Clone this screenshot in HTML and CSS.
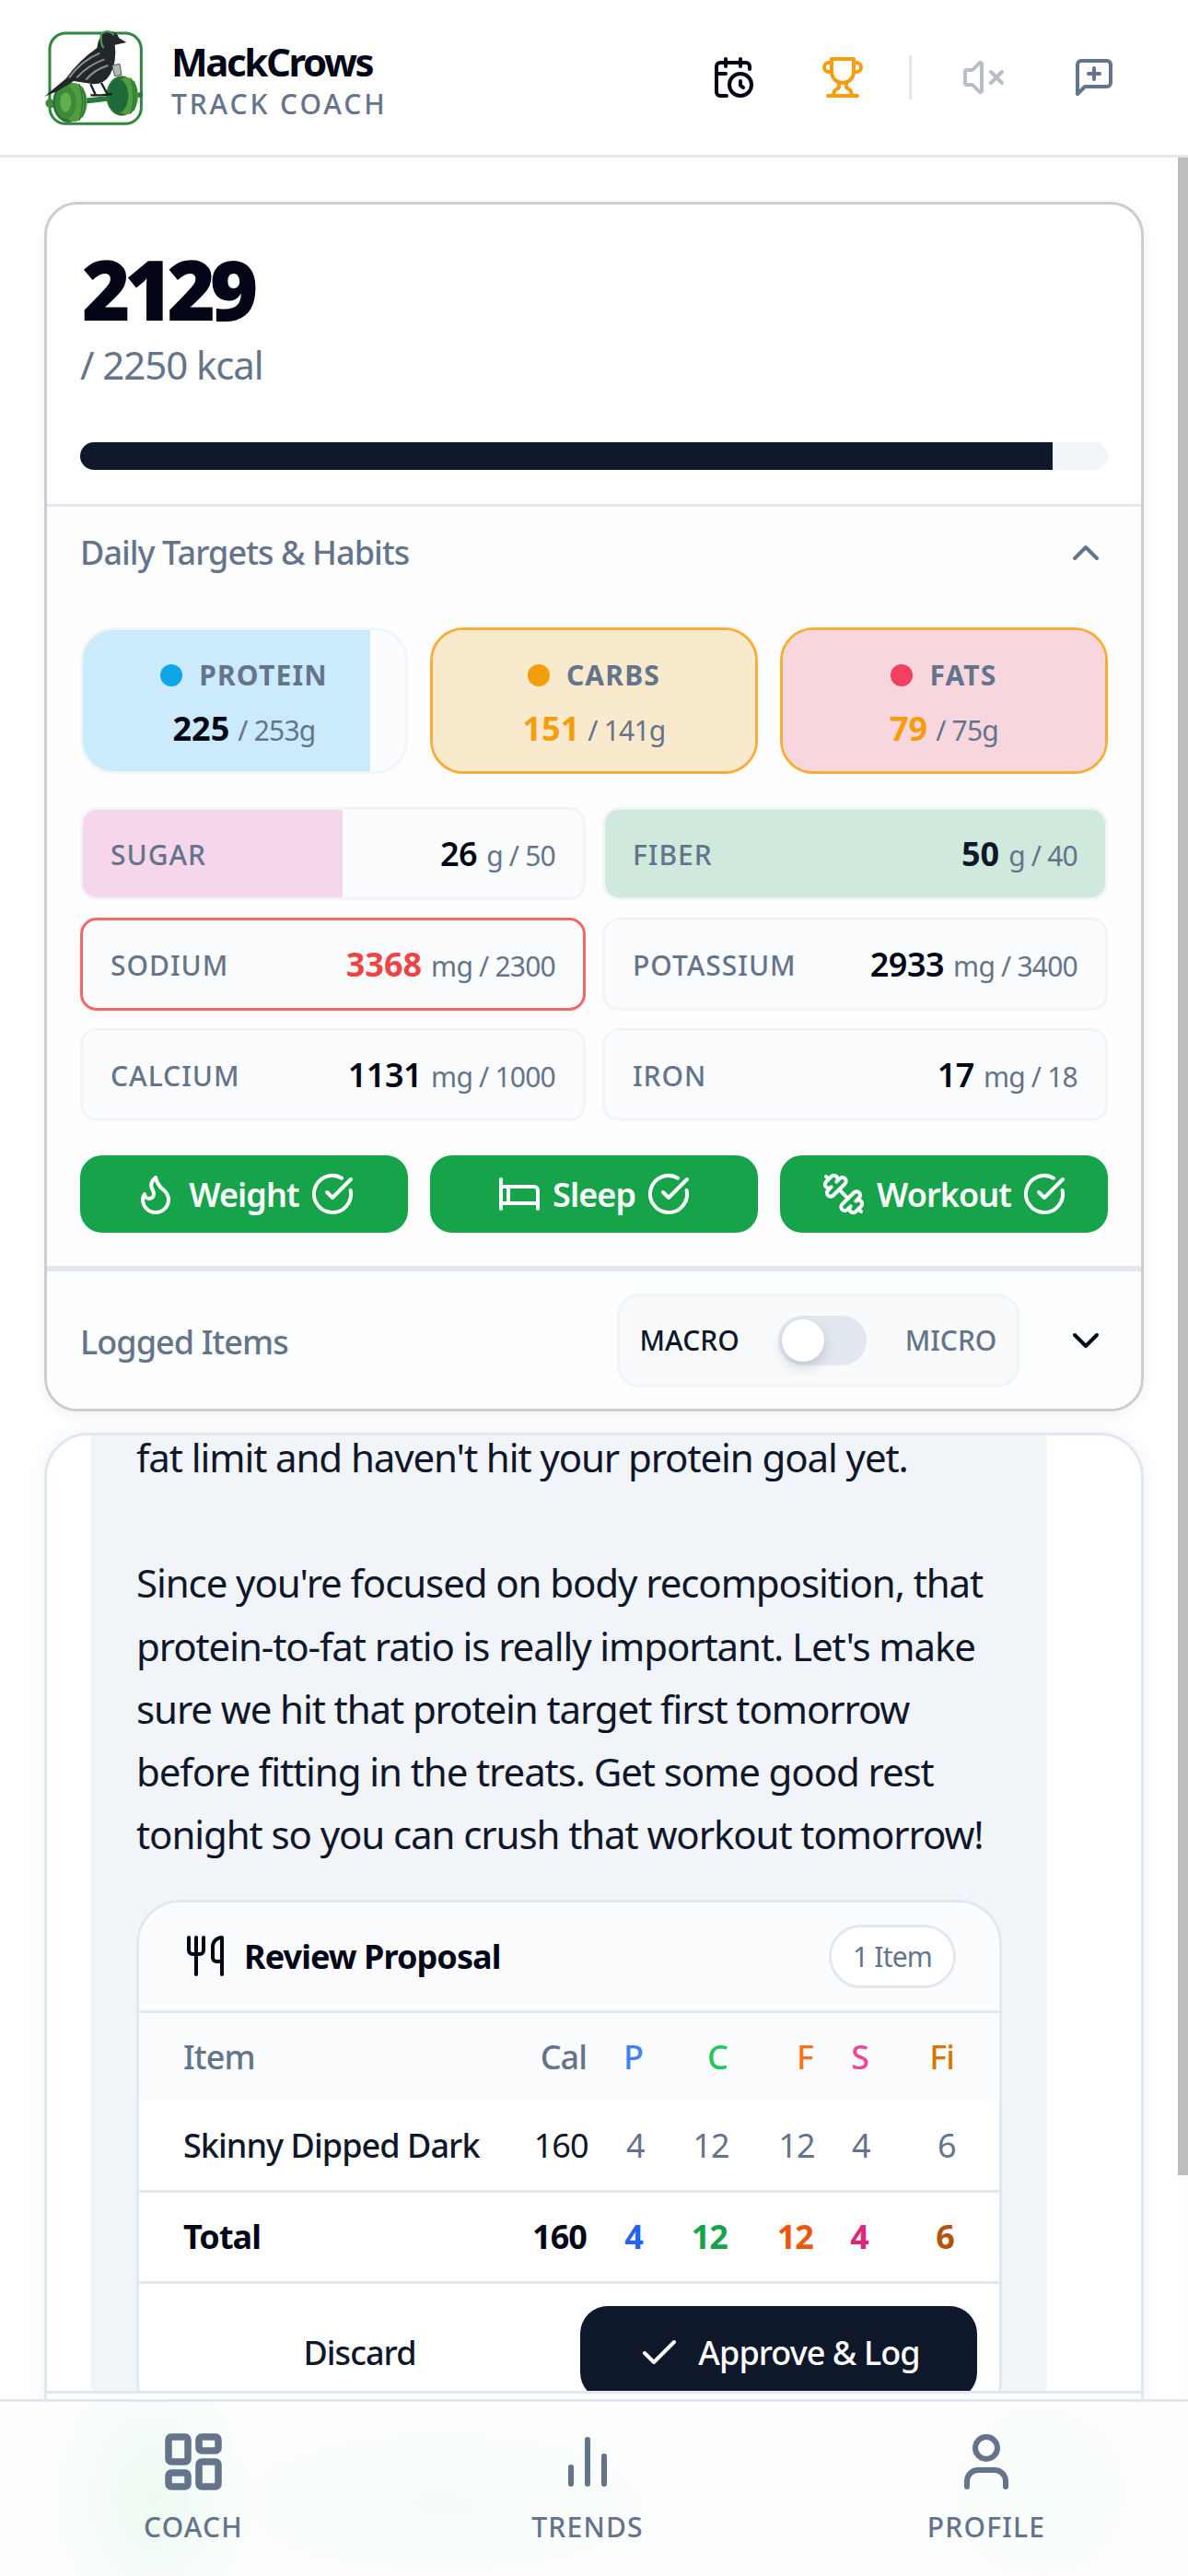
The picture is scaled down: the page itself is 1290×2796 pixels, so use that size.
FILE: index.html
```html
<!DOCTYPE html>
<html lang="en">
<head>
<meta charset="utf-8">
<title>MackCrows Track Coach</title>
<link rel="stylesheet" href="styles.css">
</head>
<body>
<div class="app">
  <header class="topbar">
    <div class="brand">
      <svg class="logo" viewBox="54 45 321 321">
        <rect x="72" y="60" width="298" height="295" rx="52" fill="#fff" stroke="#2f8542" stroke-width="9"/>
        <path d="M70 284 L375 252 L375 268 L70 304 Z" fill="#2c7a37"/>
        <circle cx="72" cy="288" r="14" fill="#3d8b3d"/>
        <ellipse cx="132" cy="285" rx="50" ry="66" fill="#2b7334"/>
        <ellipse cx="152" cy="285" rx="42" ry="63" fill="#4f9d40"/>
        <path d="M168 226 Q190 285 168 344 M178 236 Q196 285 178 334" stroke="#2b7334" stroke-width="4" fill="none"/>
        <ellipse cx="124" cy="285" rx="34" ry="54" fill="#3b8a3a"/>
        <ellipse cx="124" cy="285" rx="18" ry="32" fill="#62ad4c"/>
        <ellipse cx="306" cy="264" rx="50" ry="65" fill="#2b7334"/>
        <ellipse cx="322" cy="264" rx="38" ry="61" fill="#4f9d40"/>
        <path d="M336 206 Q356 264 336 322 M346 216 Q360 264 346 312" stroke="#2b7334" stroke-width="4" fill="none"/>
        <ellipse cx="296" cy="264" rx="32" ry="54" fill="#1f6a3a"/>
        <path d="M55 266 L125 208 Q165 150 226 108 Q232 62 262 54 Q290 52 298 76 L322 90 L284 98 Q292 150 268 196 Q250 226 214 226 L150 216 L95 250 Z" fill="#24272a"/>
        <path d="M135 205 Q175 150 235 125 M160 205 Q195 165 250 145 M190 212 Q215 180 262 165" stroke="#8b9094" stroke-width="6" fill="none"/>
        <path d="M205 226 L222 262 M240 222 L262 262 M205 262 L240 262 M240 262 L275 258" stroke="#1c1e20" stroke-width="7" fill="none"/>
        <path d="M240 62 Q236 95 248 108 M240 62 Q262 45 282 66" stroke="#3d9a4a" stroke-width="7" fill="none"/>
        <path d="M275 165 L300 160 L306 195 L284 200 Z" fill="#b4b8bb" stroke="#555" stroke-width="3"/>
      </svg>
      <div class="brand-text">
        <div class="brand-name">MackCrows</div>
        <div class="brand-sub">TRACK COACH</div>
      </div>
    </div>
    <div class="top-actions">
      <svg class="ic ic-dark" viewBox="0 0 24 24"><path d="M21 7.5V6a2 2 0 0 0-2-2H5a2 2 0 0 0-2 2v14a2 2 0 0 0 2 2h3.5"/><path d="M16 2v4"/><path d="M8 2v4"/><path d="M3 10h5"/><path d="M17.5 17.5 16 16.3V14"/><circle cx="16" cy="16" r="6"/></svg>
      <svg class="ic ic-amber" viewBox="0 0 24 24"><path d="M6 9H4.5a2.5 2.5 0 0 1 0-5H6"/><path d="M18 9h1.5a2.5 2.5 0 0 0 0-5H18"/><path d="M4 22h16"/><path d="M10 14.66V17c0 .55-.47.98-.97 1.21C7.85 18.75 7 20.24 7 22"/><path d="M14 14.66V17c0 .55.47.98.97 1.21C16.15 18.75 17 20.24 17 22"/><path d="M18 2H6v7a6 6 0 0 0 12 0V2Z"/></svg>
      <span class="top-sep"></span>
      <svg class="ic ic-muted" viewBox="0 0 24 24"><path d="M11 4.702a.705.705 0 0 0-1.203-.498L6.413 7.587A1.4 1.4 0 0 1 5.416 8H3a1 1 0 0 0-1 1v6a1 1 0 0 0 1 1h2.416a1.4 1.4 0 0 1 .997.413l3.383 3.384A.705.705 0 0 0 11 19.298z"/><path d="M22 9l-6 6"/><path d="M16 9l6 6"/></svg>
      <svg class="ic ic-slate" viewBox="0 0 24 24"><path d="M21 15a2 2 0 0 1-2 2H7l-4 4V5a2 2 0 0 1 2-2h14a2 2 0 0 1 2 2z"/><path d="M12 7v6"/><path d="M9 10h6"/></svg>
    </div>
  </header>

  <div class="main">
    <div class="scroll">
      <section class="card summary">
        <div class="kcal">
          <div class="kcal-num">2129</div>
          <div class="kcal-goal">/ 2250 kcal</div>
          <div class="bar"><div class="bar-fill" style="width:94.6%"></div></div>
        </div>
        <div class="targets">
          <div class="sec-head">
            <span class="sec-title">Daily Targets &amp; Habits</span>
            <svg class="ic ic-slate" viewBox="0 0 24 24"><path d="m18 15-6-6-6 6"/></svg>
          </div>
          <div class="macros">
            <div class="macro">
              <div class="fill fill-sky" style="width:89%"></div>
              <div class="macro-label"><span class="dot dot-sky"></span>PROTEIN</div>
              <div class="macro-val"><b>225</b> <span>/ 253g</span></div>
            </div>
            <div class="macro over">
              <div class="fill fill-amber" style="width:100%"></div>
              <div class="macro-label"><span class="dot dot-amber"></span>CARBS</div>
              <div class="macro-val"><b class="amber">151</b> <span>/ 141g</span></div>
            </div>
            <div class="macro over">
              <div class="fill fill-rose" style="width:100%"></div>
              <div class="macro-label"><span class="dot dot-rose"></span>FATS</div>
              <div class="macro-val"><b class="amber">79</b> <span>/ 75g</span></div>
            </div>
          </div>
          <div class="micros">
            <div class="micro">
              <div class="fill fill-pink" style="width:52%"></div>
              <span class="micro-label">SUGAR</span>
              <span class="micro-val"><b>26</b> <span>g / 50</span></span>
            </div>
            <div class="micro">
              <div class="fill fill-green" style="width:100%"></div>
              <span class="micro-label">FIBER</span>
              <span class="micro-val"><b class="heavy">50</b> <span>g / 40</span></span>
            </div>
            <div class="micro alert">
              <span class="micro-label">SODIUM</span>
              <span class="micro-val"><b class="heavy red">3368</b> <span>mg / 2300</span></span>
            </div>
            <div class="micro">
              <span class="micro-label">POTASSIUM</span>
              <span class="micro-val"><b>2933</b> <span>mg / 3400</span></span>
            </div>
            <div class="micro">
              <span class="micro-label">CALCIUM</span>
              <span class="micro-val"><b>1131</b> <span>mg / 1000</span></span>
            </div>
            <div class="micro">
              <span class="micro-label">IRON</span>
              <span class="micro-val"><b>17</b> <span>mg / 18</span></span>
            </div>
          </div>
          <div class="habits">
            <button class="habit">
              <svg class="ic" viewBox="0 0 24 24"><path d="M8.5 14.5A2.5 2.5 0 0 0 11 12c0-1.38-.5-2-1-3-1.072-2.143-.224-4.054 2-6 .5 2.5 2 4.9 4 6.5 2 1.6 3 3.5 3 5.5a7 7 0 1 1-14 0c0-1.153.433-2.294 1-3a2.5 2.5 0 0 0 2.5 2.5z"/></svg>
              <span>Weight</span>
              <svg class="ic" viewBox="0 0 24 24"><path d="M21.801 10A10 10 0 1 1 17 3.335"/><path d="m9 11 3 3L22 4"/></svg>
            </button>
            <button class="habit">
              <svg class="ic" viewBox="0 0 24 24"><path d="M2 4v16"/><path d="M2 8h18a2 2 0 0 1 2 2v10"/><path d="M2 17h20"/><path d="M6 8v9"/></svg>
              <span>Sleep</span>
              <svg class="ic" viewBox="0 0 24 24"><path d="M21.801 10A10 10 0 1 1 17 3.335"/><path d="m9 11 3 3L22 4"/></svg>
            </button>
            <button class="habit">
              <svg class="ic" viewBox="0 0 24 24"><path d="M14.4 14.4 9.6 9.6"/><path d="M18.657 21.485a2 2 0 1 1-2.829-2.828l-1.767 1.768a2 2 0 1 1-2.829-2.829l6.364-6.364a2 2 0 1 1 2.829 2.829l-1.768 1.767a2 2 0 1 1 2.828 2.829z"/><path d="m21.5 21.5-1.4-1.4"/><path d="M3.9 3.9 2.5 2.5"/><path d="M6.404 12.768a2 2 0 1 1-2.829-2.829l1.768-1.767a2 2 0 1 1-2.828-2.829l2.828-2.828a2 2 0 1 1 2.829 2.828l1.767-1.768a2 2 0 1 1 2.829 2.829z"/></svg>
              <span>Workout</span>
              <svg class="ic" viewBox="0 0 24 24"><path d="M21.801 10A10 10 0 1 1 17 3.335"/><path d="m9 11 3 3L22 4"/></svg>
            </button>
          </div>
        </div>
        <div class="logged">
          <span class="sec-title">Logged Items</span>
          <div class="switch-box">
            <span class="sw-on">MACRO</span>
            <span class="switch"><span class="thumb"></span></span>
            <span class="sw-off">MICRO</span>
          </div>
          <svg class="ic ic-dark" viewBox="0 0 24 24"><path d="m6 9 6 6 6-6"/></svg>
        </div>
      </section>

      <section class="card chat">
        <div class="messages">
          <div class="bubble">
            <p class="msg">fat limit and haven't hit your protein goal yet.</p>
            <p class="msg msg-next">Since you're focused on body recomposition, that protein-to-fat ratio is really important. Let's make sure we hit that protein target first tomorrow before fitting in the treats. Get some good rest tonight so you can crush that workout tomorrow!</p>
            <div class="proposal">
              <div class="prop-head">
                <svg class="ic ic-dark" viewBox="0 0 24 24"><path d="M3 2v7c0 1.1.9 2 2 2h4a2 2 0 0 0 2-2V2"/><path d="M7 2v20"/><path d="M21 15V2a5 5 0 0 0-5 5v6c0 1.1.9 2 2 2h3Zm0 0v7"/></svg>
                <span class="prop-title">Review Proposal</span>
                <span class="pill">1 Item</span>
              </div>
              <div class="row row-head">
                <span class="cell-name">Item</span><span>Cal</span>
                <span class="c-p">P</span><span class="c-c">C</span><span class="c-f">F</span><span class="c-s">S</span><span class="c-fi">Fi</span>
              </div>
              <div class="row row-item">
                <span class="cell-name">Skinny Dipped Dark</span><span class="cal">160</span>
                <span>4</span><span>12</span><span>12</span><span>4</span><span>6</span>
              </div>
              <div class="row row-total">
                <span class="cell-name">Total</span><span>160</span>
                <span class="t-p">4</span><span class="t-c">12</span><span class="t-f">12</span><span class="t-s">4</span><span class="t-fi">6</span>
              </div>
              <div class="prop-actions">
                <button class="discard">Discard</button>
                <button class="approve">
                  <svg class="ic" viewBox="0 0 24 24"><path d="M20 6 9 17l-5-5"/></svg>
                  Approve &amp; Log
                </button>
              </div>
            </div>
          </div>
        </div>
        <div class="composer"></div>
      </section>
    </div>
    <div class="scrollbar"><div class="scroll-thumb"></div></div>
  </div>

  <nav class="tabs">
    <div class="tab">
      <svg class="ic tab-ic tab-heavy" viewBox="0 0 24 24"><rect width="7" height="9" x="3" y="3" rx="1"/><rect width="7" height="5" x="14" y="3" rx="1"/><rect width="7" height="9" x="14" y="12" rx="1"/><rect width="7" height="5" x="3" y="16" rx="1"/></svg>
      <span>COACH</span>
    </div>
    <div class="tab">
      <svg class="ic tab-ic" viewBox="0 0 24 24"><path d="M18 20V10"/><path d="M12 20V4"/><path d="M6 20v-6"/></svg>
      <span>TRENDS</span>
    </div>
    <div class="tab">
      <svg class="ic tab-ic" viewBox="0 0 24 24"><path d="M19 21v-2a4 4 0 0 0-4-4H9a4 4 0 0 0-4 4v2"/><circle cx="12" cy="7" r="4"/></svg>
      <span>PROFILE</span>
    </div>
  </nav>
</div>
</body>
</html>
```
FILE: styles.css
```css
* { box-sizing: border-box; letter-spacing: -0.026em; }
html, body { margin: 0; padding: 0; }
body { width: 1290px; height: 2796px; overflow: hidden; background: #fff; font-family: "Noto Sans", sans-serif; color: #0f172a; }
button { font-family: inherit; border: 0; background: none; padding: 0; }
p { margin: 0; }
.app { width: 1290px; height: 2796px; display: flex; flex-direction: column; }

.ic { width: 48px; height: 48px; flex: none; fill: none; stroke: currentColor; stroke-width: 2; stroke-linecap: round; stroke-linejoin: round; display: block; }
.ic-dark { color: #020617; }
.ic-amber { color: #f59e0b; }
.ic-muted { color: #b6bec9; }
.ic-slate { color: #64748b; }

.topbar { height: 171px; flex: none; border-bottom: 3px solid #e2e8f0; display: flex; align-items: center; justify-content: space-between; padding: 0 78px 0 48px; }
.brand { display: flex; align-items: center; gap: 31px; }
.logo { width: 107px; height: 107px; display: block; }
.brand-text { padding-top: 6px; }
.brand-name { font-size: 42px; line-height: 52px; font-weight: 700; color: #020617; letter-spacing: -2.4px; }
.brand-sub { font-size: 30px; line-height: 40px; font-weight: 500; color: #64748b; letter-spacing: 2.9px; margin-top: 0; }
.top-actions { display: flex; align-items: center; }
.top-actions .ic-amber { margin-left: 71px; }
.top-sep { width: 3px; height: 48px; background: #e2e8f0; margin: 0 54px 0 48px; }
.top-actions .ic-slate { margin-left: 72px; }

.main { flex: 1; min-height: 0; display: flex; overflow: hidden; }
.scroll { width: 1279px; flex: none; padding: 48px 37px 0 48px; overflow: hidden; display: flex; flex-direction: column; gap: 23px; }
.scrollbar { width: 11px; flex: none; background: #fdfdfd; }
.scroll-thumb { height: 2190px; background: #bdbdbd; }

.card { border-radius: 36px; background: #fff; flex: none; }
.summary { border: 3px solid #cbcdd2; box-shadow: 0 4px 14px rgba(15, 23, 42, .06); overflow: hidden; }

.kcal { height: 325px; padding: 46px 36px 0; }
.kcal-num { font-size: 90px; line-height: 90px; font-weight: 900; color: #020617; letter-spacing: -6.5px; padding-left: 2px; }
.kcal-goal { font-size: 42px; line-height: 60px; color: #64748b; margin-top: 8px; }
.bar { height: 30px; background: #f1f5f9; border-radius: 15px; margin-top: 54px; overflow: hidden; }
.bar-fill { height: 100%; background: #0f172a; }

.targets { border-top: 3px solid #e2e8f0; padding: 0 36px 36px; background: #fefefe; border-bottom: 6px solid #e2e8f0; }
.sec-head { height: 131px; display: flex; align-items: center; justify-content: space-between; padding-bottom: 32px; }
.sec-title { font-size: 36px; line-height: 48px; font-weight: 500; color: #64748b; }

.macros { display: grid; grid-template-columns: repeat(3, 1fr); gap: 24px; }
.macro { position: relative; height: 159px; border: 3px solid #f1f5f9; border-radius: 36px; background: #fbfcfe; overflow: hidden; display: flex; flex-direction: column; align-items: center; padding-top: 28px; }
.macro.over { border-color: #f9ac37; }
.fill { position: absolute; left: 0; top: 0; bottom: 0; }
.fill-sky { background: #cbeafb; }
.fill-amber { background: #f9e9cd; }
.fill-rose { background: #f8d6de; }
.fill-pink { background: #f6d6eb; }
.fill-green { background: #cfeadc; }
.macro-label { position: relative; display: flex; align-items: center; gap: 18px; font-size: 30px; line-height: 42px; font-weight: 700; color: #64748b; letter-spacing: 1.2px; }
.dot { width: 24px; height: 24px; border-radius: 50%; }
.dot-sky { background: #0ea5e9; }
.dot-amber { background: #f59e0b; }
.dot-rose { background: #f43f5e; }
.macro-val { position: relative; margin-top: 12px; font-size: 30px; line-height: 50px; color: #64748b; white-space: pre; }
.macro-val b { font-size: 36px; font-weight: 700; color: #020617; letter-spacing: 0; margin-right: 2px; }
.macro-val b.amber { color: #f59e0b; }

.micros { display: grid; grid-template-columns: repeat(2, 1fr); gap: 19px 18px; margin-top: 36px; }
.micro { position: relative; height: 101px; border: 3px solid #f1f5f9; border-radius: 18px; background: #fbfcfe; overflow: hidden; display: flex; align-items: center; justify-content: space-between; padding: 2px 30px 0; }
.micro.alert { border-color: #f26868; }
.micro-label { position: relative; font-size: 30px; line-height: 40px; font-weight: 500; color: #64748b; letter-spacing: 1px; }
.micro-val { position: relative; font-size: 30px; line-height: 50px; color: #64748b; white-space: pre; }
.micro-val b { font-size: 36px; font-weight: 600; color: #020617; letter-spacing: -.5px; margin-right: 3px; }
.micro-val b.heavy { font-weight: 700; color: #0f172a; letter-spacing: 0; }
.micro-val b.red { color: #ef4444; }

.habits { display: grid; grid-template-columns: repeat(3, 1fr); gap: 24px; margin-top: 37px; }
.habit { height: 84px; border-radius: 24px; background: #16a34a; color: #fff; display: flex; align-items: center; justify-content: center; gap: 12px; font-size: 36px; font-weight: 600; }

.logged { height: 149px; background: #fdfefe; display: flex; align-items: center; padding: 0 36px; }
.logged .sec-title { flex: 1; padding-top: 4px; }
.switch-box { width: 437px; height: 102px; border: 3px solid #f1f5f9; border-radius: 24px; background: #f8fafc; display: flex; align-items: center; justify-content: center; gap: 42px; font-size: 30px; font-weight: 500; margin-right: 48px; }
.switch-box span { letter-spacing: 0; }
.sw-off { color: #64748b; }
.switch { width: 96px; height: 54px; border-radius: 27px; background: #e2e8f0; padding: 4px; display: block; }
.thumb { display: block; width: 46px; height: 46px; border-radius: 50%; background: #fff; box-shadow: 0 6px 14px rgba(15, 23, 42, .16); }

.chat { height: 1106px; border: 3px solid #e2e8f0; border-radius: 48px; overflow: hidden; box-shadow: 0 0 16px rgba(226, 232, 240, .6); display: flex; flex-direction: column; }
.messages { height: 1037px; flex: none; overflow: hidden; padding: 0 102px 0 48px; }
.bubble { margin-top: -10px; padding: 0 49px; background: #f1f4f9; height: 1100px; }
.msg { font-size: 42px; line-height: 68.25px; color: #0f172a; }
.msg-next { margin-top: 68px; }
.composer { flex: 1; border-top: 3px solid #e2e8f0; background: #fff; }

.proposal { margin-top: 36px; border: 3px solid #e2e8f0; border-radius: 48px; background: #fff; overflow: hidden; }
.prop-head { height: 120px; border-bottom: 3px solid #e2e8f0; background: #fbfcfe; display: flex; align-items: center; gap: 18px; padding: 0 47px 0 48px; }
.prop-title { flex: 1; font-size: 36px; font-weight: 700; color: #020617; }
.pill { height: 69px; width: 138px; border: 3px solid #e2e8f0; border-radius: 35px; background: #fff; display: flex; align-items: center; justify-content: center; font-size: 30px; color: #64748b; }
.row { display: grid; grid-template-columns: 1fr 118px 61px 92px 93px 60px 93px; padding: 0 49px 0 48px; align-items: center; height: 96px; font-size: 36px; text-align: right; }
.cell-name { text-align: left; white-space: nowrap; }
.row-head { background: #fbfcfe; font-weight: 500; color: #64748b; }
.c-p { color: #3b82f6; }
.c-c { color: #22c55e; }
.c-f { color: #f97316; }
.c-s { color: #ec4899; }
.c-fi { color: #d97706; }
.row-item { color: #64748b; border-bottom: 3px solid #e2e8f0; height: 99px; }
.row-item .cell-name { font-weight: 500; color: #0f172a; }
.row-item .cal { color: #0f172a; }
.row-total { font-weight: 700; color: #020617; border-bottom: 3px solid #e2e8f0; height: 99px; }
.t-p { color: #2563eb; }
.t-c { color: #16a34a; }
.t-f { color: #ea580c; }
.t-s { color: #db2777; }
.t-fi { color: #b45309; }
.prop-actions { display: grid; grid-template-columns: 1fr 1fr; gap: 24px; padding: 24px; }
.discard { height: 102px; font-size: 36px; font-weight: 500; color: #0f172a; }
.approve { height: 102px; border-radius: 30px; background: #0f172a; color: #fff; font-size: 36px; font-weight: 500; display: flex; align-items: center; justify-content: center; gap: 18px; }

.tabs { height: 192px; flex: none; border-top: 3px solid #e2e8f0; background:
  radial-gradient(ellipse 110px 150px at 165px 105px, rgba(34, 197, 94, .07), transparent),
  radial-gradient(ellipse 260px 90px at 480px 110px, rgba(34, 197, 94, .03), transparent),
  radial-gradient(ellipse 120px 120px at 1130px 100px, rgba(34, 197, 94, .025), transparent),
  #fcfefd;
  display: grid; grid-template-columns: 420px 436px 430px; }
.tab { display: flex; flex-direction: column; align-items: center; padding-top: 29px; font-size: 30px; line-height: 40px; font-weight: 500; color: #64748b; letter-spacing: 1.2px; }
.tab span { letter-spacing: 1.2px; }
.tab-ic { width: 72px; height: 72px; margin-bottom: 15px; }
.tab-heavy { stroke-width: 2.5; }
```
